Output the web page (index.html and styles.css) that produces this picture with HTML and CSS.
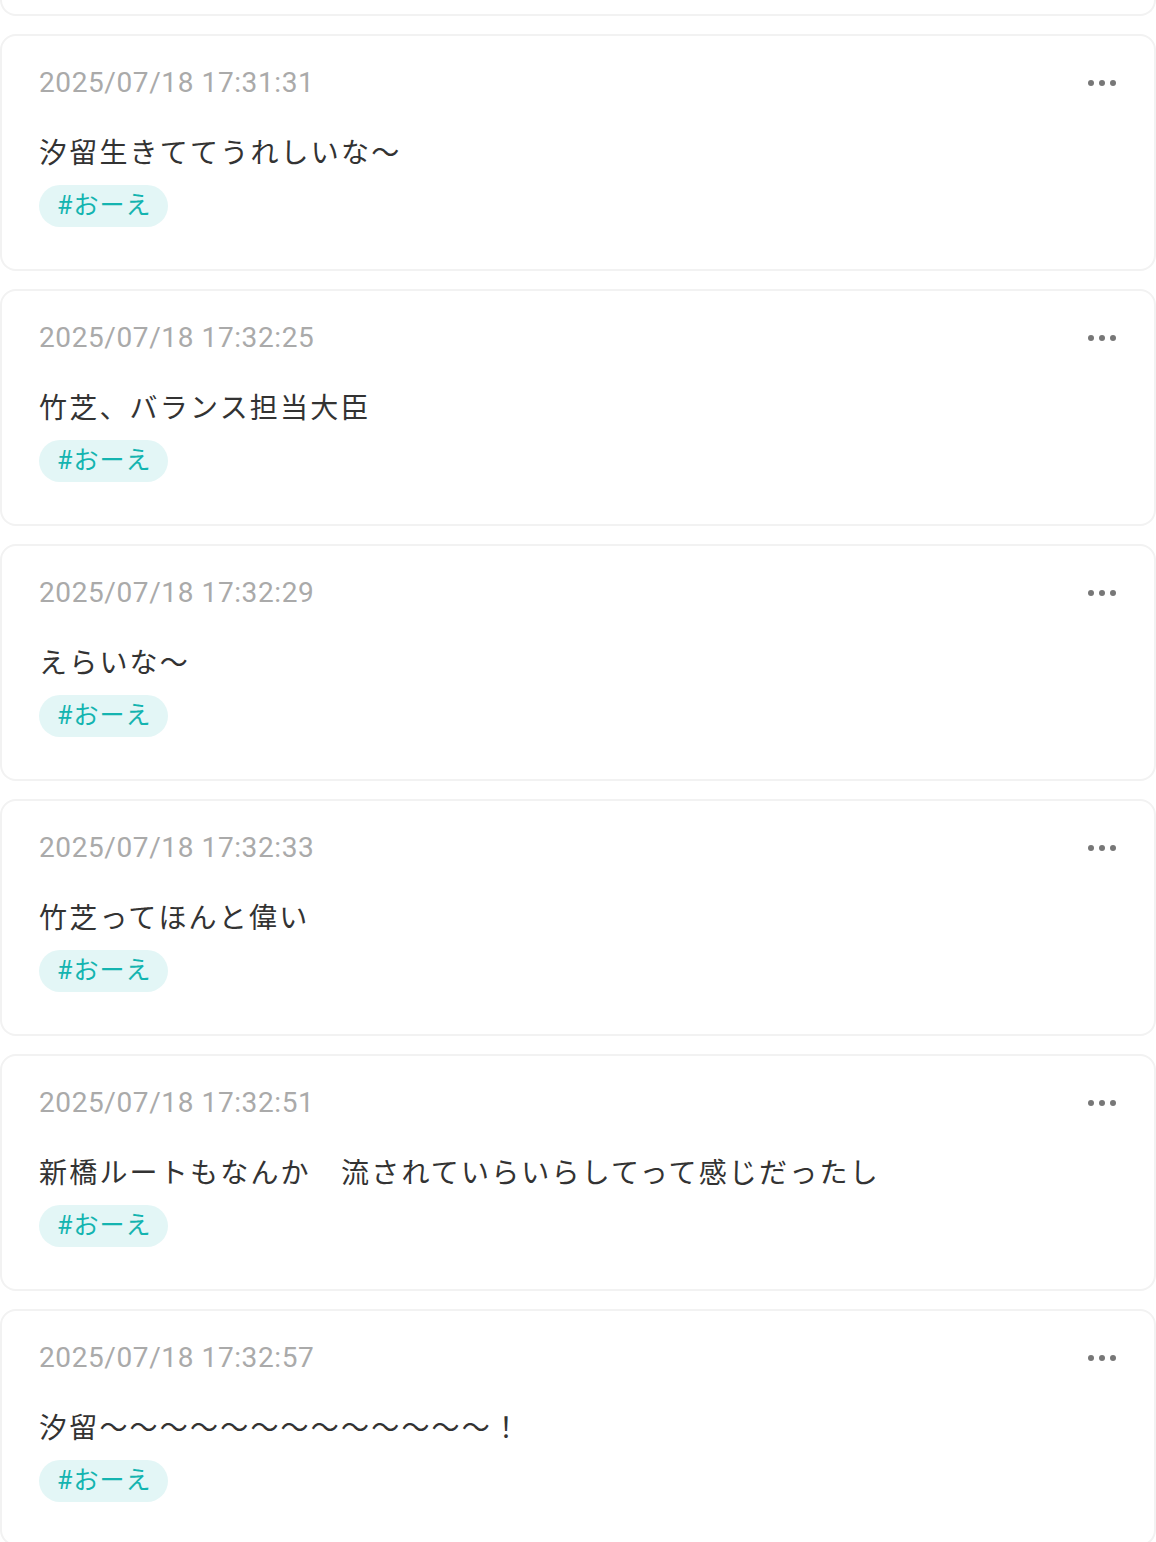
FILE: index.html
```html
<!DOCTYPE html>
<html lang="ja">
<head>
    <meta charset="UTF-8">
    <meta name="viewport" content="width=device-width, initial-scale=1.0">
    <title>メモ一覧</title>
    <link rel="stylesheet" href="styles.css">
</head>
<body>
    <div class="memo-list">
        <!-- 上にスクロール済みの投稿の下端 -->
        <div class="memo-card-tail"></div>

        <div class="memo-card">
            <div class="memo-head">
                <span class="memo-time">2025/07/18 17:31:31</span>
                <span class="memo-menu"><i></i><i></i><i></i></span>
            </div>
            <p class="memo-text">汐留生きててうれしいな～</p>
            <span class="memo-tag">#おーえ</span>
        </div>

        <div class="memo-card">
            <div class="memo-head">
                <span class="memo-time">2025/07/18 17:32:25</span>
                <span class="memo-menu"><i></i><i></i><i></i></span>
            </div>
            <p class="memo-text">竹芝、バランス担当大臣</p>
            <span class="memo-tag">#おーえ</span>
        </div>

        <div class="memo-card">
            <div class="memo-head">
                <span class="memo-time">2025/07/18 17:32:29</span>
                <span class="memo-menu"><i></i><i></i><i></i></span>
            </div>
            <p class="memo-text">えらいな～</p>
            <span class="memo-tag">#おーえ</span>
        </div>

        <div class="memo-card">
            <div class="memo-head">
                <span class="memo-time">2025/07/18 17:32:33</span>
                <span class="memo-menu"><i></i><i></i><i></i></span>
            </div>
            <p class="memo-text">竹芝ってほんと偉い</p>
            <span class="memo-tag">#おーえ</span>
        </div>

        <div class="memo-card">
            <div class="memo-head">
                <span class="memo-time">2025/07/18 17:32:51</span>
                <span class="memo-menu"><i></i><i></i><i></i></span>
            </div>
            <p class="memo-text">新橋ルートもなんか　流されていらいらしてって感じだったし</p>
            <span class="memo-tag">#おーえ</span>
        </div>

        <div class="memo-card">
            <div class="memo-head">
                <span class="memo-time">2025/07/18 17:32:57</span>
                <span class="memo-menu"><i></i><i></i><i></i></span>
            </div>
            <p class="memo-text">汐留～～～～～～～～～～～～～！</p>
            <span class="memo-tag">#おーえ</span>
        </div>
    </div>
</body>
</html>
```

FILE: styles.css
```css
body {
    margin: 0;
    background-color: #ffffff;
    font-family: Roboto, "Noto Sans CJK JP", sans-serif;
    overflow: hidden;
}

.memo-list {
    display: flex;
    flex-direction: column;
    gap: 18px;
}

.memo-card {
    box-sizing: border-box;
    height: 237px;
    flex-shrink: 0;
    padding: 26px 38px 0 37px;
    border: 2px solid #f2f2f2;
    border-radius: 16px;
    background-color: #fff;
}

/* ひとつ上の投稿は下端だけ見えている */
.memo-card-tail {
    box-sizing: border-box;
    height: 16px;
    flex-shrink: 0;
    border: 2px solid #f2f2f2;
    border-top: none;
    border-radius: 0 0 16px 16px;
}

.memo-head {
    display: flex;
    justify-content: space-between;
    align-items: center;
    height: 40px;
}

.memo-time {
    font-size: 28px;
    letter-spacing: 0.6px;
    color: #aaaaaa;
}

.memo-menu {
    display: flex;
    gap: 5px;
    margin-top: 2px;
}

.memo-menu i {
    width: 6px;
    height: 6px;
    border-radius: 50%;
    background-color: #777;
}

.memo-text {
    margin: 29px 0 14px;
    font-family: "Noto Sans CJK JP", sans-serif;
    font-size: 28px;
    line-height: 40px;
    letter-spacing: 2.2px;
    color: #333;
}

.memo-tag {
    display: inline-block;
    height: 42px;
    padding: 0 17px 0 18px;
    border-radius: 21px;
    background-color: #e3f6f6;
    color: #14b4b0;
    font-size: 25px;
    line-height: 42px;
    letter-spacing: 1px;
}
```
